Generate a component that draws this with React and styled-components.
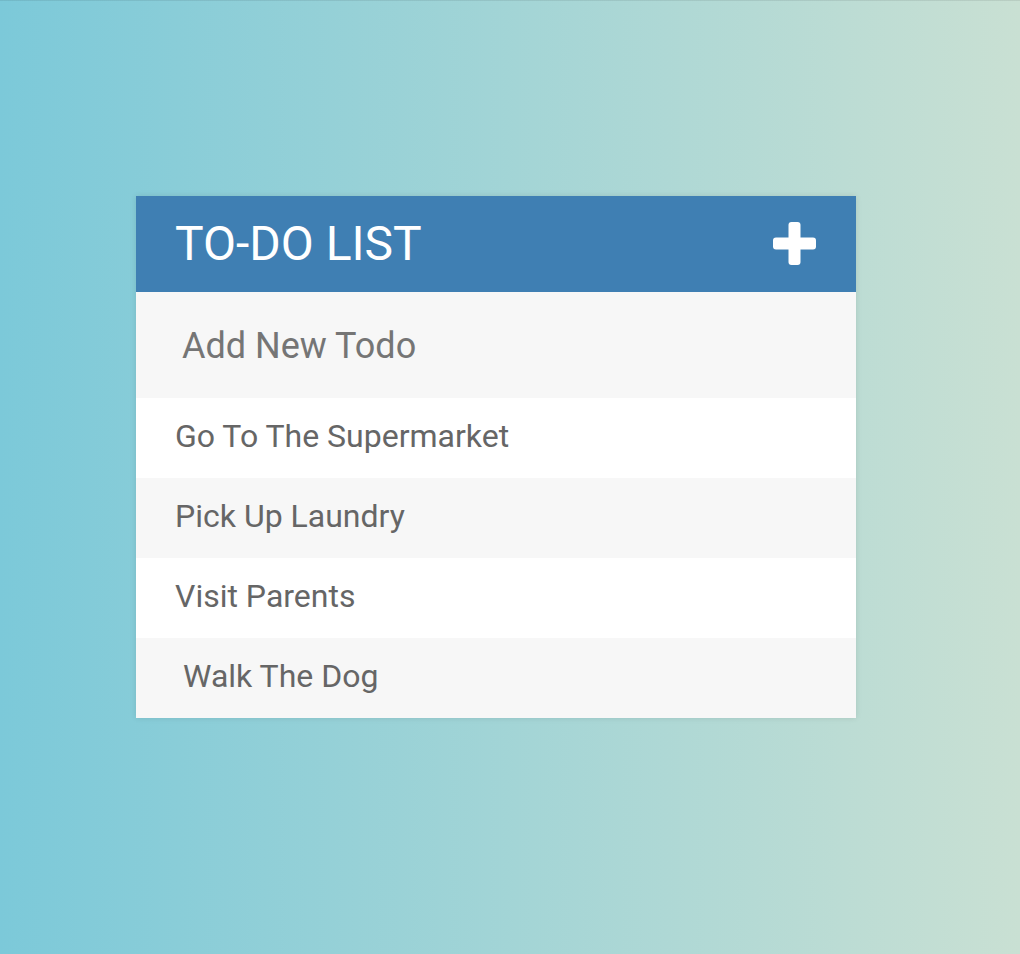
import React from 'react';
import styled, { createGlobalStyle } from 'styled-components';

const GlobalStyle = createGlobalStyle`
  html, body { margin: 0; padding: 0; }
  body { font-family: Roboto, "Liberation Sans", sans-serif; }
`;

const todos = [
  { text: 'Go To The Supermarket' },
  { text: 'Pick Up Laundry' },
  { text: 'Visit Parents' },
  { text: 'Walk The Dog', indent: 47 },
];

const PlusIcon = () => (
  <svg width="44" height="44" viewBox="0 0 44 44" aria-hidden="true">
    <rect x="1" y="15.5" width="43" height="12" rx="3" fill="#fff" />
    <rect x="16.5" y="0" width="12" height="43" rx="3" fill="#fff" />
  </svg>
);

const App = () => {
  return (
    <Page>
      <GlobalStyle />
      <Container>
        <Header>
          <Title>To-Do List</Title>
          <AddButton type="button"><PlusIcon /></AddButton>
        </Header>
        <NewTodo type="text" placeholder="Add New Todo" />
        <List>
          {todos.map((t) => (
            <Item key={t.text} $indent={t.indent}>{t.text}</Item>
          ))}
        </List>
      </Container>
    </Page>
  );
};

export default App;

const Page = styled.div`
  min-height: 100vh;
  box-sizing: border-box;
  border-top: 1px solid rgba(0, 0, 0, 0.08);
  background: linear-gradient(to left, #c9e0d3, #7cc9d9);
  padding: 195px 0 0 136px;
`;

const Container = styled.div`
  width: 720px;
  background: #f7f7f7;
  box-shadow: 0 0 6px rgba(0, 0, 0, 0.1);
`;

const Header = styled.div`
  display: flex;
  align-items: center;
  justify-content: space-between;
  background: #3f7fb3;
  padding: 20px 40px 20px 39px;
`;

const Title = styled.h1`
  margin: 0;
  color: #fff;
  font-size: 48px;
  font-weight: normal;
  text-transform: uppercase;
  line-height: 56px;
`;

const AddButton = styled.button`
  display: flex;
  border: none;
  background: none;
  padding: 0;
  cursor: pointer;
`;

const NewTodo = styled.input`
  display: block;
  width: 100%;
  box-sizing: border-box;
  font-family: Roboto, "Liberation Sans", sans-serif;
  font-size: 36px;
  line-height: 42px;
  padding: 27px 26px 25px 40px;
  border: 6px solid transparent;
  background: #f7f7f7;
  color: #2980b9;
  outline: none;

  &::placeholder { color: #757575; }
`;

const List = styled.ul`
  list-style: none;
  margin: 0;
  padding: 0;
`;

const Item = styled.li`
  height: 80px;
  line-height: 77px;
  font-size: 32px;
  color: #666;
  background: #fff;
  padding-left: ${(p) => p.$indent || 39}px;

  &:nth-child(2n) { background: #f7f7f7; }
`;
